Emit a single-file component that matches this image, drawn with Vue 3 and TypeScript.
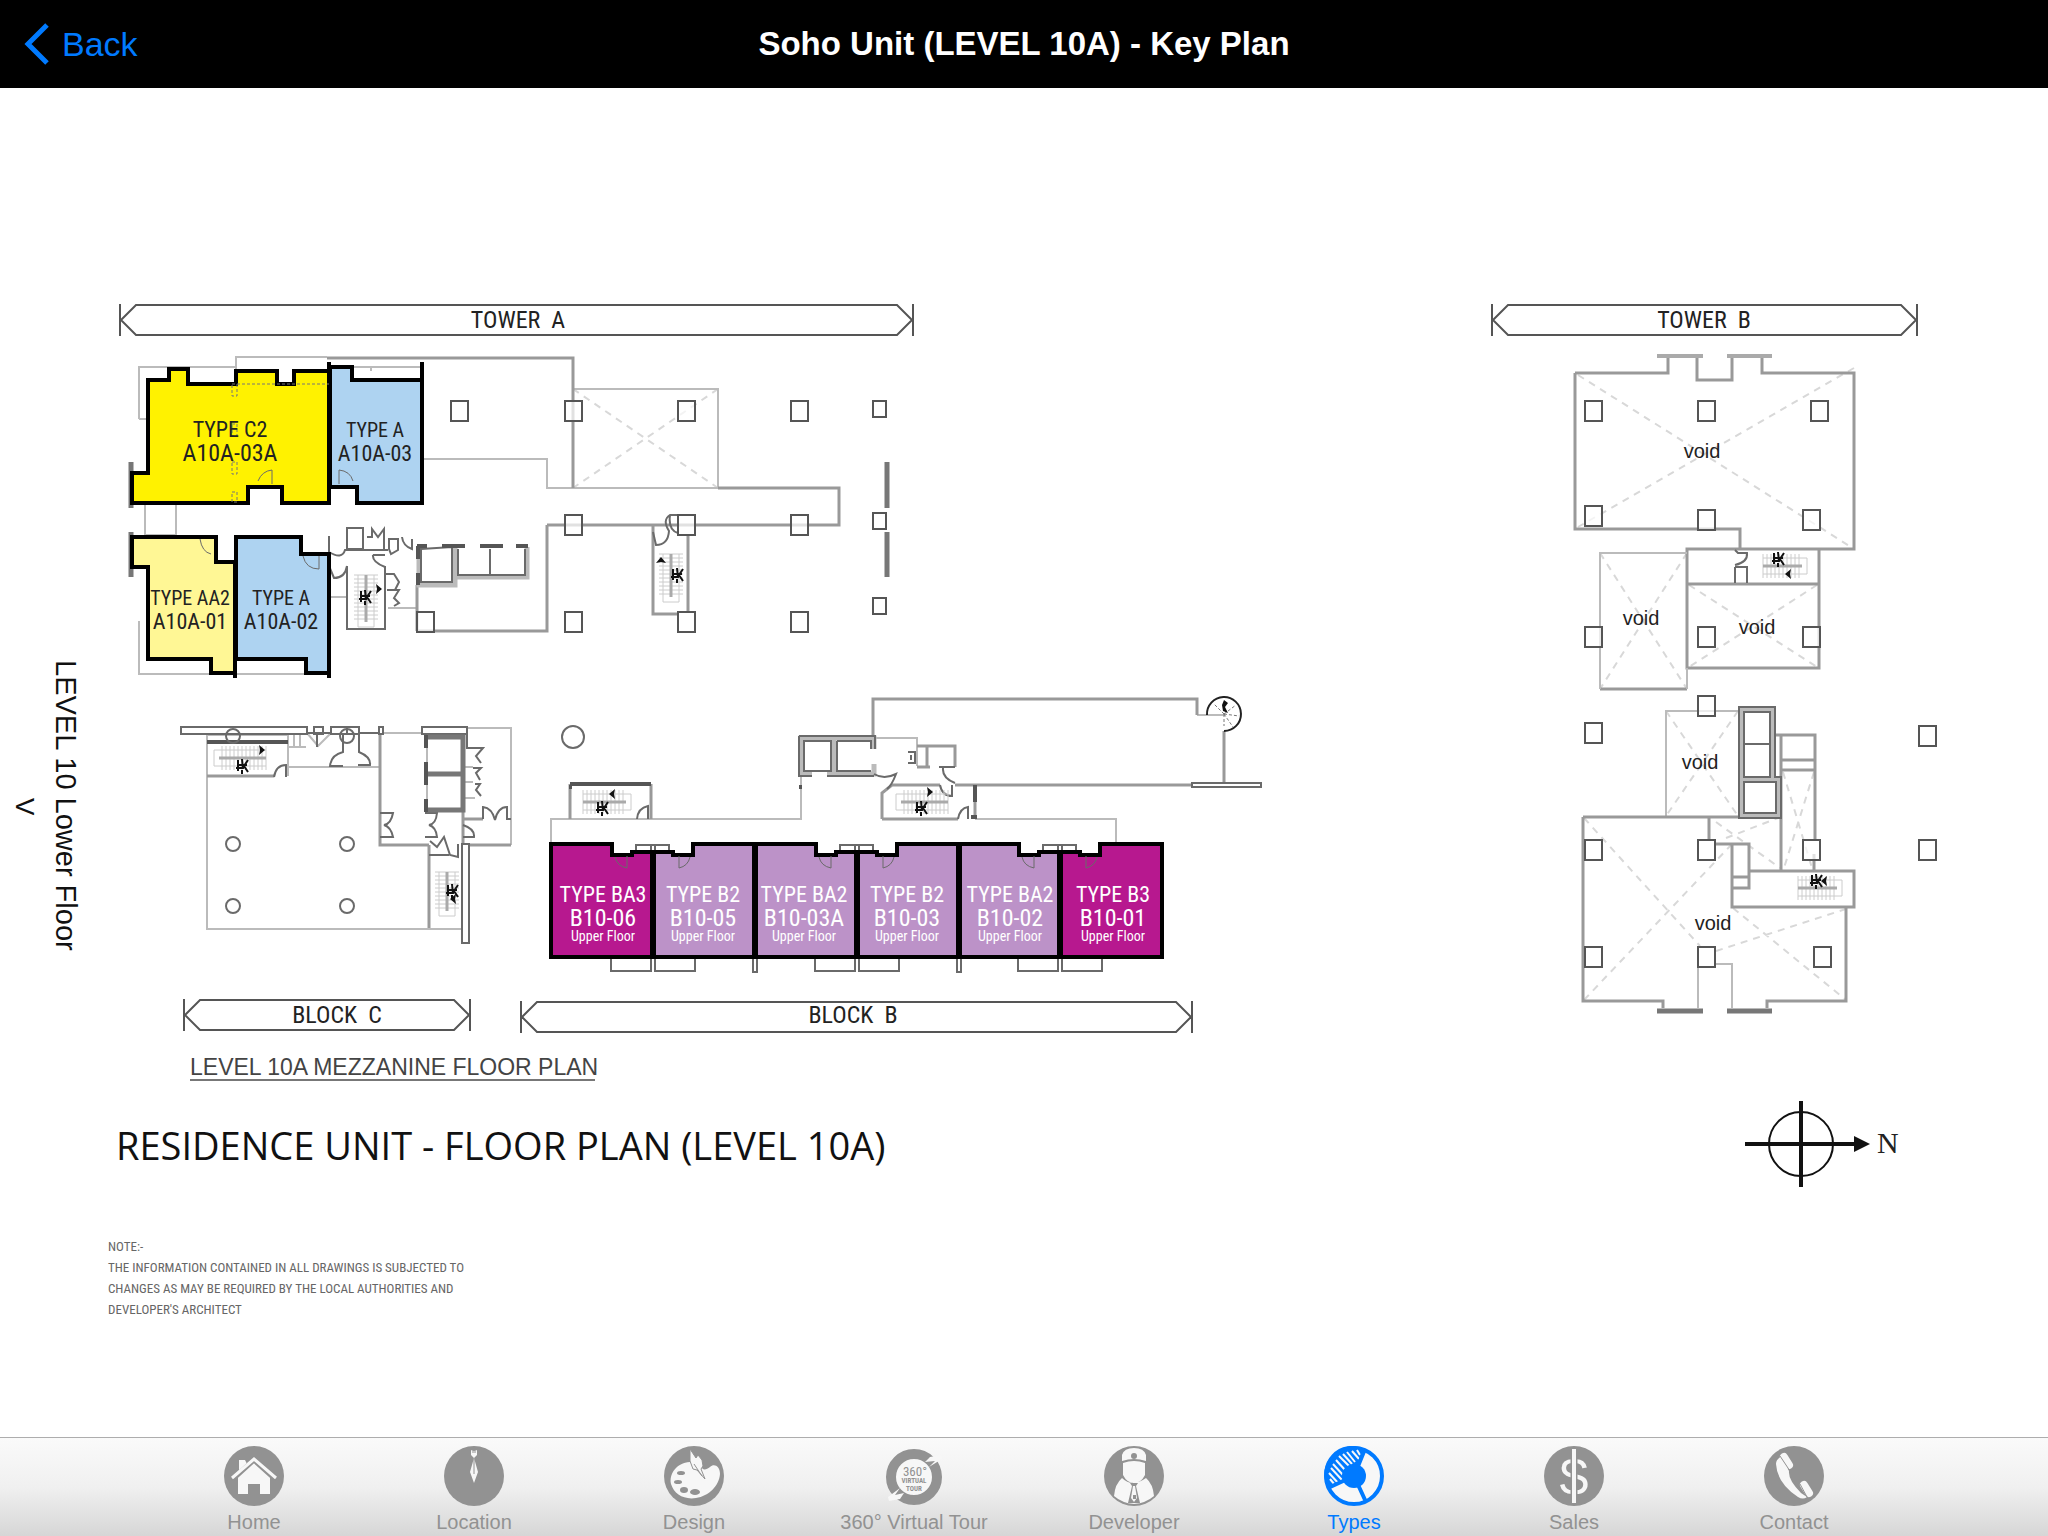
<script setup lang="ts">
interface Banner { label: string; x1: number; x2: number; y: number; text: number; base: number }
interface Unit { x: number; y: number; type: string; code: string; kind: string; gap: number }
interface Stair { x: number; y: number; turn: number; length: number }

const banners: Banner[] = [
  { label: 'TOWER \u00a0A', x1: 120, x2: 913, y: 305, text: 518, base: 328 },
  { label: 'TOWER \u00a0B', x1: 1492, x2: 1917, y: 305, text: 1704, base: 328 },
  { label: 'BLOCK \u00a0C', x1: 184, x2: 470, y: 1000, text: 337, base: 1023 },
  { label: 'BLOCK \u00a0B', x1: 521, x2: 1192, y: 1002, text: 853, base: 1023 },
]

const units: Unit[] = [
  { x: 230, y: 437, type: 'TYPE C2', code: 'A10A-03A', kind: 'wide', gap: 24 },
  { x: 375, y: 437, type: 'TYPE A', code: 'A10A-03', kind: 'slim', gap: 24 },
  { x: 190, y: 605, type: 'TYPE AA2', code: 'A10A-01', kind: 'slim', gap: 24 },
  { x: 281, y: 605, type: 'TYPE A', code: 'A10A-02', kind: 'slim', gap: 24 },
  { x: 603, y: 902, type: 'TYPE BA3', code: 'B10-06', kind: 'upper', gap: 24 },
  { x: 703, y: 902, type: 'TYPE B2', code: 'B10-05', kind: 'upper', gap: 24 },
  { x: 804, y: 902, type: 'TYPE BA2', code: 'B10-03A', kind: 'upper', gap: 24 },
  { x: 907, y: 902, type: 'TYPE B2', code: 'B10-03', kind: 'upper', gap: 24 },
  { x: 1010, y: 902, type: 'TYPE BA2', code: 'B10-02', kind: 'upper', gap: 24 },
  { x: 1113, y: 902, type: 'TYPE B3', code: 'B10-01', kind: 'upper', gap: 24 },
]

const columns: number[][] = [
  [451, 401], [565, 401], [678, 401], [791, 401],
  [565, 515], [678, 515], [791, 515],
  [417, 612], [565, 612], [678, 612], [791, 612],
  [1585, 401], [1698, 401], [1811, 401],
  [1585, 506], [1698, 510], [1803, 510],
  [1585, 627], [1698, 627], [1803, 627],
  [1698, 696], [1585, 723], [1919, 726],
  [1585, 840], [1698, 840], [1803, 840], [1919, 840],
  [1585, 947], [1698, 947], [1814, 947],
]
const smallColumns: number[][] = [[873, 401], [873, 513], [873, 598]]
const pillars: number[][] = [[233, 736], [347, 736], [233, 844], [347, 844], [233, 906], [347, 906]]
const voids: number[][] = [[1702, 458], [1641, 625], [1757, 634], [1700, 769], [1713, 930]]

const stairs: Stair[] = [
  { x: 366, y: 601, turn: 90, length: 52 },
  { x: 671, y: 578, turn: 90, length: 48 },
  { x: 240, y: 758, turn: 180, length: 52 },
  { x: 447, y: 894, turn: 90, length: 44 },
  { x: 607, y: 802, turn: 0, length: 48 },
  { x: 922, y: 802, turn: 180, length: 52 },
  { x: 1785, y: 566, turn: 0, length: 44 },
  { x: 1820, y: 888, turn: 0, length: 44 },
]
/* The up-stair mark, placed on the flight it belongs to. */
const marks: number[][] = [[366, 597], [678, 575], [243, 766], [453, 891], [603, 808], [922, 808], [1779, 559], [1817, 881]]
const arrows: number[][] = [
  [378, 589, 180], [661, 561, 90], [261, 750, 180], [454, 899, 0],
  [613, 794, 0], [929, 792, 180], [1789, 574, 0], [1825, 881, 0],
]

/* Block B is three mirrored pairs that share a party wall. */
const pairs: number[] = [653, 857, 1060]
const leftUnit = (c: number) => `M${c - 102} 844H${c - 41}V855H${c - 21}V852H${c}V957H${c - 102}Z`
const rightUnit = (c: number) => `M${c + 102} 844H${c + 40}V855H${c + 20}V852H${c}V957H${c + 102}Z`
const balcony = (c: number) =>
  `M${c - 42} 959V971H${c - 2}M${c + 42} 959V971H${c + 2}M${c - 2} 959V972M${c + 2} 959V972M${c - 17} 852V845H${c + 16}V852M${c - 2} 845V851M${c + 2} 845V851`
const doors = (c: number) =>
  `M${c - 26} 856V868Q${c - 36} 866 ${c - 38} 857M${c + 26} 856V868Q${c + 35} 866 ${c + 37} 857`

const banner = (b: Banner) =>
  `M${b.x1} ${b.y - 1}v32M${b.x2} ${b.y - 1}v32M${b.x1 + 1} ${b.y + 15}L${b.x1 + 16} ${b.y}H${b.x2 - 16}L${b.x2 - 1} ${b.y + 15}L${b.x2 - 16} ${b.y + 30}H${b.x1 + 16}Z`

const treads = (length: number) => {
  let d = ''
  for (let x = -length / 2; x <= length / 2 - 6; x += 4) d += `M${x} -12V12`
  return d
}

const tabs: string[] = ['Home', 'Location', 'Design', '360° Virtual Tour', 'Developer', 'Types', 'Sales', 'Contact']
const active = 'Types'
</script>

<template>
  <div class="screen">
    <header class="navbar">
      <button class="back" type="button">
        <svg width="26" height="44" viewBox="0 0 26 44" aria-hidden="true">
          <path d="M23 3 4 22l19 19" fill="none" stroke="currentColor" stroke-width="5" />
        </svg>
        <span>Back</span>
      </button>
      <h1>Soho Unit (LEVEL 10A) - Key Plan</h1>
    </header>

    <main>
      <svg class="plan" viewBox="0 88 2048 1349" role="img" aria-label="Level 10A floor plan">
        <g v-for="b in banners" :key="b.label">
          <path class="banner" :d="banner(b)" />
          <text class="banner-label" :x="b.text" :y="b.base">{{ b.label }}</text>
        </g>

        <!-- Dashed void diagonals -->
        <path class="dashed" d="M573 389 718 488M718 389 573 488
          M1578 375 1851 547M1854 368 1578 527M1600 553 1687 689M1687 553 1600 689
          M1689 585 1817 667M1817 585 1689 667M1666 711 1738 816M1738 711 1666 816
          M1584 818 1700 946M1584 1000 1732 844M1733 908 1846 1000M1716 951 1852 907
          M1716 822 1780 868M1726 838 1778 818M1783 772 1812 868M1814 772 1784 868" />

        <!-- Tower A outlines -->
        <path class="light" d="M139 419V367H236M139 419H147M236 370V357H327M352 367H420M371 367V371
          M139 621V674H211M237 674H305M145 505V535M176 505V535M176 535H145
          M573 389H718V488M424 459H547V488H718M330 597H347M388 608H417" />
        <path class="line" d="M327 358H573V488M718 488H839V525H653M547 525H653M547 525V631H417M417 585V631
          M653 525V614H679M688 536V611" />
        <path class="thin" d="M347 528H363V549H347ZM347 566V629H385V566M345 550H388M367 537H372V529L378 537L384 529V549
          M389 539H398V550L391 554L389 549ZM402 537Q403 546 412 549V539M329 536V552Q342 560 345 550H352
          M329 566L334 578Q345 578 347 566M373 555H385M373 555Q372 562 385 567M385 574H394L399 582L395 590H387
          L399 590L394 598L399 603L394 606M653 532L656 545Q668 545 669 531Q662 520 670 515H678M670 515Q668 530 678 533" />
        <path class="lift" d="M419 547V585H455V547M455 577H527V547" />
        <path class="thin" d="M421 549V582H452V547ZM458 549V575H525V549M490 549V575" />
        <path class="wall" d="M417 546H427M442 546H465M480 546H503M516 546H528M418 546V559M418 573V585" />
        <path class="bar" d="M131 462V508M131 532V577M887 462V508M887 532V577" />

        <!-- Tower A units -->
        <g class="unit">
          <path class="yellow" d="M148 380H169V369H188V384H236V371H277V384H294V371H329V503H282V487H248V503H132V473H148Z" />
          <path class="blue" d="M330 367H352V380H422V503H357V487H330Z" />
          <path class="cream" d="M132 537H216V562H235V673H211V659H148V567H132Z" />
          <path class="blue" d="M236 537H301V554H329V673H306V659H236Z" />
          <path d="M329 362V503M422 362V503M235 562V678M329 554V678" />
        </g>
        <path class="thin door" d="M258 481Q262 471 272 470V484M339 484V470Q350 471 353 481M200 539Q202 552 211 554
          M303 556Q306 569 319 569V556" />
        <path class="dashed dark" d="M232 384H237V396H232ZM232 424H237V436H232ZM232 462H237V474H232ZM232 492H237V502H232ZM237 384H329" />

        <!-- Block C -->
        <path class="light" d="M207 742V929H461M207 742V735H288V776M288 767H380M288 747H306M294 735V747M300 735V747
          M383 733H422M467 728H511V845M307 733L318 746L331 733M465 767H473M465 782H473M465 798H475" />
        <path class="line" d="M380 733V845H429M429 845V928M469 845H511M463 819H483M463 812V845M207 776H274" />
        <path class="thin" d="M181 727H307V734H181ZM314 727H323V734H314ZM331 727H359V734H331ZM379 727H383V734H379Z
          M422 727H467V734H422ZM462 844H469V943H462ZM307 733H331M359 733H379M317 734V747M343 734V752Q331 755 330 766H343
          M359 734V752Q371 757 370 765H358M274 777Q276 765 286 765V777M467 727V748H483L476 756L481 763M473 768H481L476 773L480 780
          M475 784H480L476 790L481 796M483 819V807Q492 808 495 820Q498 807 507 807V819H511M380 813H393Q391 824 384 825
          Q391 827 393 837H380M425 813H437Q436 824 429 825Q436 827 437 837H425M463 825Q475 829 474 837H463M430 841L437 847
          L444 837L450 855L458 857V844M429 855H449M347 727V734" />
        <path class="lift solid" d="M427 737H463V810H427M427 774H463" />
        <path class="light" d="M427 739V808" />
        <path class="wall" d="M207 742H288M426 735V748M426 762V785M426 799V812" />
        <circle v-for="p in pillars" :key="p.join()" class="thin" :cx="p[0]" :cy="p[1]" r="7" />

        <!-- Block B core -->
        <path class="light" d="M551 844V819H801V775M975 819H1116V844M873 738H917V766M1197 715H1225" />
        <path class="line" d="M873 737V699H1197V715M1224 731V784M955 785H1192M570 784V819M651 784V819M882 819V793L892 785H940
          M882 819H958M975 785V819M917 746H955V767M917 767H930M927 747V767" />
        <path class="lift" d="M801 775V738H874V749M801 774H812M827 774H874V764M834 738V774" />
        <path class="thin" d="M799 736H875V749M799 736V776H812M827 776H874M804 741H831V771H804ZM837 741V771H871M837 741H871V749
          M637 819Q638 808 648 806V819M874 774Q884 780 896 774Q892 785 887 789M939 767H955M943 768Q942 778 955 783
          M940 785Q942 796 952 796V785M958 819Q960 808 968 807V819M908 752H915V763H908M911 755V760M1192 783H1261V787H1192Z" />
        <path class="wall" d="M570 784H651M975 785V802M971 817H977M569 787H572M799 787H802" />
        <circle class="thin" cx="573" cy="737" r="11" />
        <path class="spiral" d="M1207 715A17 17 0 1 1 1224 731" />
        <path class="dashed dark" d="M1224 714 1236 705M1224 714 1239 716M1224 714 1233 727M1224 714 1214 704M1224 714V726" />
        <path class="mark" d="M1224 700l4 3-3 4 3 6-5-2-1-6z" />

        <!-- Block B units -->
        <g v-for="(c, i) in pairs" :key="c">
          <path class="thin" :d="balcony(c)" />
          <g class="unit">
            <path :class="i === 0 ? 'magenta' : 'lilac'" :d="leftUnit(c)" />
            <path :class="i === 2 ? 'magenta' : 'lilac'" :d="rightUnit(c)" />
            <path class="party" :d="`M${c} 852V957`" />
          </g>
          <path class="thin door" :d="doors(c)" />
        </g>
        <path class="party" d="M755 844V957M959 844V957" />
        <path class="thin" d="M753 959V972H757V959M957 959V972H961V959" />

        <!-- Tower B -->
        <path class="line" d="M1575 373H1668V356M1697 356V380H1732V356M1762 356V373H1854V549H1687V668H1819V549M1575 373V529H1740V549
          M1687 584H1819M1600 689H1687" />
        <path class="light" d="M1687 553H1600V689M1687 668V689M1738 711H1666V817" />
        <path class="bar light-bar" d="M1657 356H1703M1727 356H1772" />
        <path class="thin" d="M1735 550L1738 553H1747Q1748 562 1735 565M1735 567H1747V583M1735 567V583" />
        <path class="line" d="M1583 817H1739M1583 817V1001H1663V1008M1767 1008V1001H1846V907M1709 817V840M1715 844H1749V888H1732M1732 844V907
          H1854V871H1749M1732 877H1749M1775 735H1815V840M1781 735V871M1781 760H1815M1781 770H1815M1814 854V871" />
        <path class="light" d="M1698 968V1008M1715 964H1732V1008" />
        <path class="lift" d="M1741 709H1773V779H1779V816H1741ZM1741 779H1773" />
        <path class="thin" d="M1744 712H1770V777H1744ZM1744 744H1770M1744 782H1776V813H1744ZM1739 707H1775V777H1781V818H1739Z" />
        <path class="bar" d="M1657 1011H1703M1727 1011H1772" />

        <rect v-for="c in columns" :key="c.join()" class="column" :x="c[0]" :y="c[1]" width="17" height="20" />
        <rect v-for="c in smallColumns" :key="c.join()" class="column" :x="c[0]" :y="c[1]" width="13" height="16" />

        <g v-for="s in stairs" :key="`${s.x}-${s.y}`" :transform="`translate(${s.x} ${s.y}) rotate(${s.turn})`">
          <path class="tread" :d="treads(s.length)" />
          <path class="tread" :d="`M${-s.length / 2} -8H${s.length / 2}V8H${-s.length / 2}`" />
          <path class="rail" :d="`M${-s.length / 2} 0H${s.length / 2 - 5}`" />
        </g>
        <path
          v-for="m in marks"
          :key="m.join()"
          class="figure"
          :transform="`translate(${m[0]} ${m[1]})`"
          d="M-5-6V5M-1-7 0 3M5-6 1 0 5 6M-7 2H-1M-1 4V8M-4-1H4"
        />
        <path
          v-for="a in arrows"
          :key="a.join()"
          class="mark"
          :transform="`translate(${a[0]} ${a[1]}) rotate(${a[2]})`"
          d="M2-5-4 0 2 5 1 0z"
        />

        <g v-for="u in units" :key="u.code" :class="['label', u.kind]">
          <text class="type" :x="u.x" :y="u.y">{{ u.type }}</text>
          <text class="code" :x="u.x" :y="u.y + u.gap">{{ u.code }}</text>
          <text v-if="u.kind === 'upper'" class="floor" :x="u.x" :y="u.y + 39">Upper Floor</text>
        </g>
        <text v-for="v in voids" :key="v.join()" class="void" :x="v[0]" :y="v[1]">void</text>

        <text class="side" transform="translate(56 660) rotate(90)">LEVEL 10 Lower Floor</text>
        <text class="side-arrow" transform="translate(16 798) rotate(90)">V</text>

        <text class="subtitle" x="190" y="1075">LEVEL 10A MEZZANINE FLOOR PLAN</text>
        <path class="underline" d="M190 1080H595" />
        <text class="heading" x="116" y="1160">RESIDENCE UNIT - FLOOR PLAN (LEVEL 10A)</text>
        <text class="note" x="108" y="1251">NOTE:-</text>
        <text class="note" x="108" y="1272">THE INFORMATION CONTAINED IN ALL DRAWINGS IS SUBJECTED TO</text>
        <text class="note" x="108" y="1293">CHANGES AS MAY BE REQUIRED BY THE LOCAL AUTHORITIES AND</text>
        <text class="note" x="108" y="1314">DEVELOPER'S ARCHITECT</text>

        <g class="compass">
          <circle cx="1801" cy="1144" r="32" />
          <path d="M1801 1101V1187M1745 1144H1856" />
          <path class="mark" d="M1854 1136 1870 1144 1854 1152Z" />
        </g>
        <text class="north" x="1877" y="1153">N</text>
      </svg>
    </main>

    <nav class="tabbar" aria-label="Sections">
      <a v-for="t in tabs" :key="t" href="#" :class="{ active: t === active }">
        <svg width="60" height="60" viewBox="0 0 60 60" aria-hidden="true">
          <circle v-if="t !== 'Types' && t !== '360° Virtual Tour'" cx="30" cy="30" r="30" fill="currentColor" />
          <g v-if="t === 'Home'">
            <path class="w" d="M15 25V14h6l2 4 7-4 16 15v19H36V38H24v10H14V30z" />
            <path d="M8 34 30 14l22 20" fill="none" stroke="currentColor" stroke-width="5" />
            <path class="ws" d="M8 32 30 13l22 19" stroke-width="3" />
          </g>
          <g v-else-if="t === 'Location'">
            <path class="w" d="M27 4q3 2 6 0v5l-3 3-3-3zM30 12l4 14-4 11-4-11z" />
            <path d="M30 13v15M28 6h4" stroke="currentColor" stroke-width="1" />
          </g>
          <g v-else-if="t === 'Design'">
            <path class="w" d="M26 16C12 17 5 28 7 38c3 10 13 16 25 14 13-2 23-12 24-24 0-8-6-11-10-7-4 3-8 4-9-2-2-3-6-4-11-3z" />
            <path class="w" d="M26 3l6 9 2-3 4 5 1 6-2 3 4 10-8-9-4-1-3-8z" stroke="currentColor" stroke-width="1" />
            <path d="M30 18l8 12" stroke="currentColor" stroke-width="1" />
            <g fill="currentColor">
              <ellipse cx="17" cy="27" rx="4" ry="2" /><ellipse cx="14" cy="36" rx="4" ry="2" />
              <ellipse cx="20" cy="44" rx="4" ry="3" /><ellipse cx="31" cy="46" rx="5" ry="3" />
            </g>
          </g>
          <g v-else-if="t === '360° Virtual Tour'">
            <circle class="w" cx="30" cy="31" r="23" />
            <circle cx="30" cy="31" r="23" fill="none" stroke="currentColor" stroke-width="10" />
            <path class="w" d="M57 9L46 11l-5 5 10-1-6 6 13-8zM5 55l11-2 4-6-9 2 5-7-12 9z" />
            <text class="tour-number" x="31" y="30">360°</text>
            <text class="tour-word" x="30" y="37">VIRTUAL</text>
            <text class="tour-word" x="30" y="45">TOUR</text>
          </g>
          <g v-else-if="t === 'Developer'">
            <path class="w" d="M18 15V9q2-7 12-7t12 7v6q-12-4-24 0zM19 17q11-4 22 0v12q-4 8-11 8t-11-8zM18 32q10 10 24 0 7 6 8 18-8 7-20 8-12-1-20-8 1-12 8-18z" />
            <path d="M26 37h8l-2 3 4 17h-12l4-17z" fill="currentColor" />
            <path class="w" d="M29 40h2l2 12-3 4-3-4z" />
            <circle cx="30" cy="10" r="3" fill="currentColor" />
            <path d="M29 49h3v4h-3z" fill="currentColor" />
          </g>
          <g v-else-if="t === 'Types'">
            <circle class="w" cx="30" cy="30" r="28" stroke="currentColor" stroke-width="4" />
            <path d="M30 30 4 42A28 28 0 0 1 41 3z" fill="currentColor" />
            <path class="ws" d="M6 33l5 6M5 27l10 11M7 22l11 12M9 18l10 11M12 14l9 10M15 10l10 10M19 8l9 10M23 6l8 10M28 5l7 8M33 4l3 5" stroke-width="2" />
            <path d="M30 30 41 3M30 30 42 56M30 30 4 42" stroke="currentColor" stroke-width="4" />
            <circle cx="30" cy="30" r="12" fill="currentColor" />
          </g>
          <g v-else-if="t === 'Sales'">
            <text class="dollar" x="30" y="49">$</text>
            <path d="M30 2v56" stroke="currentColor" stroke-width="7" />
            <path class="ws" d="M30 3v54" stroke-width="4" />
          </g>
          <g v-else>
            <path class="w" d="M12 18q0-5 5-7l8 14q-1 9 12 22l6 4q-4 3-9 0Q13 37 12 18z" />
            <path class="ws" d="M20 11l5 8M40 39l5 8" stroke-width="8" stroke-linecap="round" />
            <path d="M16 10l10 15M36 38l7 13" fill="none" stroke="currentColor" stroke-width="1" />
          </g>
        </svg>
        <span>{{ t }}</span>
      </a>
    </nav>
  </div>
</template>

<style>
body {
  margin: 0;
  background: #fff;
}
</style>

<style scoped>
.screen {
  display: flex;
  flex-direction: column;
  min-height: 100vh;
  font-family: "Liberation Sans", Arial, sans-serif;
}
.navbar {
  display: grid;
  grid-template-columns: 1fr auto 1fr;
  align-items: center;
  height: 88px;
  background: #000;
}
.back {
  display: flex;
  align-items: center;
  gap: 12px;
  justify-self: start;
  padding: 0 24px;
  border: 0;
  background: none;
  color: #007aff;
  font: 34px "Liberation Sans", Arial, sans-serif;
}
h1 {
  margin: 0;
  color: #fff;
  font-size: 33px;
  font-weight: 700;
}
main {
  flex: 1;
}
.plan {
  display: block;
  width: 100%;
  height: auto;
}
.plan path,
.plan circle {
  fill: none;
}
.banner {
  stroke: #555;
  stroke-width: 2;
}
.banner-label,
.label text {
  font-family: "Roboto Condensed", "Open Sans Condensed", "Liberation Sans", sans-serif;
  text-anchor: middle;
  fill: #222;
}
.banner-label {
  font-size: 24px;
}
.label .type,
.label .code {
  font-size: 22px;
}
.slim .type {
  font-size: 20px;
}
.wide .code,
.upper .code {
  font-size: 24px;
}
.label .floor {
  font-size: 14px;
}
.plan .upper text {
  fill: #fff;
}
.light {
  stroke: #bbb;
  stroke-width: 2;
}
.line {
  stroke: #999;
  stroke-width: 3;
}
.underline {
  stroke: #777;
  stroke-width: 2;
}
.thin {
  stroke: #6a6a6a;
  stroke-width: 2;
}
.door {
  stroke-width: 1;
}
.lift {
  stroke: #bbb;
  stroke-width: 5;
}
.solid {
  stroke: #777;
}
.wall {
  stroke: #555;
  stroke-width: 4;
}
.bar {
  stroke: #777;
  stroke-width: 5;
}
.light-bar {
  stroke: #aaa;
  stroke-width: 4;
}
.dashed {
  stroke: #d8d8d8;
  stroke-width: 2;
  stroke-dasharray: 7 6;
}
.dark {
  stroke: #777;
  stroke-width: 1;
  stroke-dasharray: 3 2;
}
.column {
  fill: #fff;
  fill-opacity: 0.7;
  stroke: #555;
  stroke-width: 2;
}
.unit path {
  stroke: #000;
  stroke-width: 4;
}
.plan .yellow {
  fill: #fff200;
}
.plan .blue {
  fill: #aed3f1;
}
.plan .cream {
  fill: #fff795;
}
.plan .magenta {
  fill: #b7188f;
}
.plan .lilac {
  fill: #bc92c8;
}
.party,
.unit .party {
  stroke: #000;
  stroke-width: 6;
}
.tread {
  stroke: #ccc;
  stroke-width: 1;
}
.rail {
  stroke: #aaa;
  stroke-width: 3;
}
.figure {
  stroke: #111;
  stroke-width: 2;
}
.spiral {
  stroke: #222;
  stroke-width: 2;
}
.plan .mark {
  fill: #111;
  stroke: none;
}
.void {
  font-size: 20px;
  text-anchor: middle;
  fill: #222;
}
.side {
  font-size: 29px;
  fill: #111;
}
.side-arrow {
  font-size: 26px;
  fill: #111;
}
.subtitle {
  font-size: 23px;
  fill: #444;
}
.heading {
  font-family: "Open Sans", "Noto Sans", sans-serif;
  font-size: 38px;
  fill: #111;
}
.note {
  font-family: "Roboto Condensed", "Open Sans Condensed", "Liberation Sans", sans-serif;
  font-size: 13px;
  fill: #666;
}
.compass circle {
  stroke: #111;
  stroke-width: 2;
}
.compass path {
  stroke: #111;
  stroke-width: 4;
}
.north {
  font-family: "Liberation Serif", serif;
  font-size: 30px;
  fill: #222;
}
.tabbar {
  display: flex;
  justify-content: center;
  box-sizing: border-box;
  height: 99px;
  border-top: 1px solid #adadad;
  background: linear-gradient(#fafafa, #f0f0f0 50%, #d6d6d6);
}
.tabbar a {
  display: flex;
  flex: 0 1 220px;
  flex-direction: column;
  align-items: center;
  padding-top: 8px;
  color: #929292;
  font-size: 20px;
  line-height: 24px;
  text-decoration: none;
  white-space: nowrap;
}
.tabbar a span {
  padding-top: 4px;
}
.tabbar a.active {
  color: #007aff;
}
.w {
  fill: #f7f7f7;
}
.ws {
  fill: none;
  stroke: #f7f7f7;
}
.tour-number,
.tour-word {
  font-family: "Roboto Condensed", "Open Sans Condensed", "Liberation Sans", sans-serif;
  font-size: 13px;
  text-anchor: middle;
  fill: currentColor;
}
.tour-word {
  font-size: 7px;
  font-weight: 700;
}
.dollar {
  font-size: 52px;
  text-anchor: middle;
  fill: #f7f7f7;
}
</style>
